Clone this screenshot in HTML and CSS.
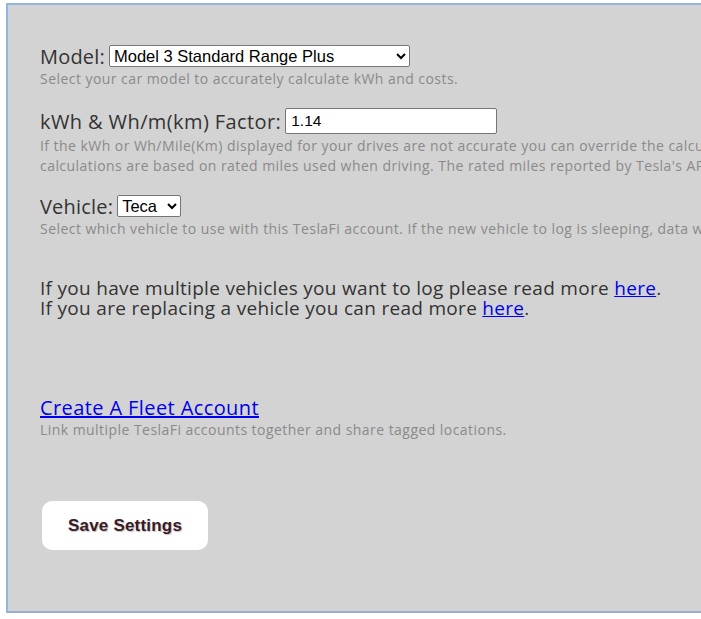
FILE: index.html
```html
<!DOCTYPE html>
<html>
<head>
<meta charset="utf-8">
<link rel="stylesheet" href="styles.css">
</head>
<body>
<div class="panel">
  <div class="field">
    <div class="row">
      <label class="label">Model:</label>
      <select class="sel sel-model"><option>Model 3 Standard Range Plus</option></select>
    </div>
    <div class="help">Select your car model to accurately calculate kWh and costs.</div>
  </div>
  <div class="field">
    <div class="row row-tall">
      <label class="label label-wide">kWh &amp; Wh/m(km) Factor:</label>
      <input class="txt" type="text" value="1.14">
    </div>
    <div class="help">If the kWh or Wh/Mile(Km) displayed for your drives are not accurate you can override the calculation factor here. The<br>calculations are based on rated miles used when driving. The rated miles reported by Tesla's API are used.</div>
  </div>
  <div class="field">
    <div class="row">
      <label class="label">Vehicle:</label>
      <select class="sel sel-veh"><option>Teca</option></select>
    </div>
    <div class="help">Select which vehicle to use with this TeslaFi account. If the new vehicle to log is sleeping, data will appear once it wakes up.</div>
  </div>
  <p class="info">If you have multiple vehicles you want to log please read more <a href="#">here</a>.<br>If you are replacing a vehicle you can read more <a href="#">here</a>.</p>
  <div class="fleet">
    <a class="fleet-link" href="#">Create A Fleet Account</a>
    <div class="help help-tight">Link multiple TeslaFi accounts together and share tagged locations.</div>
  </div>
  <button class="save">Save Settings</button>
</div>
</body>
</html>
```
FILE: styles.css
```css
html, body {
  margin: 0;
  padding: 0;
  overflow: hidden;
  background: #ffffff;
}
body {
  width: 701px;
  height: 619px;
}
.panel {
  margin: 3px 0 0 6px;
  width: 1100px;
  height: 610px;
  box-sizing: border-box;
  background: #d3d3d3;
  border: 2px solid #93b6e0;
  border-bottom-color: #9aaed0;
  padding: 40px 0 0 32px;
  font-family: "Open Sans", sans-serif;
  color: #333;
  white-space: nowrap;
}
.field {
  margin-bottom: 19px;
}
.row {
  display: flex;
  align-items: center;
  gap: 4px;
  height: 22px;
}
.row-tall {
  height: 26px;
}
.label {
  font-size: 20px;
  letter-spacing: 0.2px;
  color: #333;
}
.label-wide {
  letter-spacing: 0.4px;
}
.sel {
  font-family: "Liberation Sans", Arial, sans-serif;
  font-size: 16.5px;
  height: 22px;
  background: #fff;
  border: 1px solid #767676;
  border-radius: 2px;
  color: #000;
  padding: 0;
}
.sel-model { width: 301px; }
.sel-veh { width: 64px; }
.txt {
  font-family: "Liberation Sans", Arial, sans-serif;
  font-size: 15.5px;
  width: 212px;
  height: 26px;
  box-sizing: border-box;
  border: 1px solid #767676;
  border-radius: 2px;
  padding: 2px 5px;
  color: #000;
}
.help {
  font-size: 14px;
  letter-spacing: 0.45px;
  font-weight: 500;
  color: #8a8a8a;
  line-height: 20px;
  padding-top: 2px;
}
.help-tight {
  padding-top: 0;
}
.info {
  font-size: 19px;
  letter-spacing: 0.3px;
  line-height: 20px;
  margin: 39px 0 0;
  color: #333;
}
a { color: #0000ee; }
.fleet {
  margin-top: 78px;
}
.fleet-link {
  display: block;
  width: max-content;
  line-height: 24px;
  font-size: 20px;
  letter-spacing: 0.4px;
}
.save {
  display: block;
  margin: 61px 0 0 2px;
  width: 166px;
  height: 49px;
  background: #fff;
  border: none;
  border-radius: 10px;
  font-family: "Liberation Sans", Arial, sans-serif;
  font-weight: bold;
  font-size: 17px;
  letter-spacing: 0.2px;
  color: #3a1a26;
  text-shadow: 1px 1px 1px rgba(0,0,0,0.25);
}
```
